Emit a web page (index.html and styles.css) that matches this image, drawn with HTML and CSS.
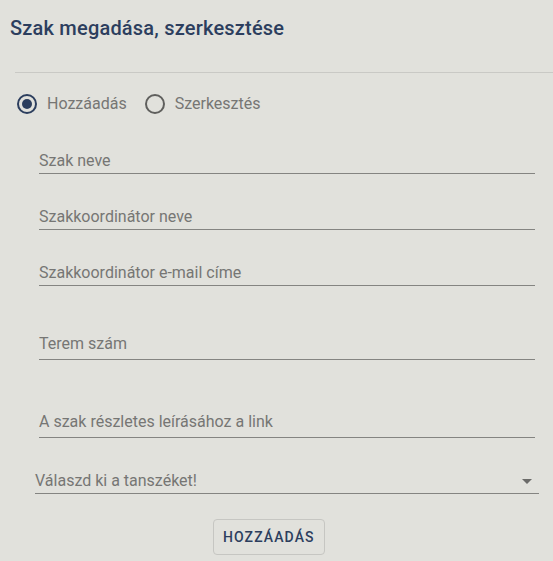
FILE: index.html
```html
<!DOCTYPE html>
<html lang="hu">
<head>
<meta charset="utf-8">
<title>Szak megadása, szerkesztése</title>
<link rel="stylesheet" href="styles.css">
</head>
<body>
<div class="page">
  <h1 class="title">Szak megadása, szerkesztése</h1>
  <div class="divider"></div>
  <div class="radios">
    <label class="radio">
      <span class="radio-circle checked"><span class="radio-dot"></span></span>
      <span class="radio-label">Hozzáadás</span>
    </label>
    <label class="radio">
      <span class="radio-circle"></span>
      <span class="radio-label">Szerkesztés</span>
    </label>
  </div>
  <div class="fields">
    <div class="field"><span class="field-label">Szak neve</span></div>
    <div class="field gap-s"><span class="field-label">Szakkoordinátor neve</span></div>
    <div class="field gap-s"><span class="field-label">Szakkoordinátor e-mail címe</span></div>
    <div class="field tall gap-m"><span class="field-label">Terem szám</span></div>
    <div class="field tall gap-l"><span class="field-label">A szak részletes leírásához a link</span></div>
  </div>
  <div class="select">
    <span class="field-label">Válaszd ki a tanszéket!</span>
    <svg class="select-arrow" width="24" height="24" viewBox="0 0 24 24"><path d="M7 10l5 5 5-5z"/></svg>
  </div>
  <div class="actions">
    <button class="btn" type="button">Hozzáadás</button>
  </div>
</div>
</body>
</html>
```

FILE: styles.css
```css
html, body {
  margin: 0;
  padding: 0;
  background: #e1e1dc;
}
body {
  font-family: Roboto, "Noto Sans", sans-serif;
  width: 553px;
  height: 561px;
  overflow: hidden;
}
.page {
  padding: 16px 0 0 10px;
}
.title {
  margin: 0;
  font-size: 20px;
  font-weight: 500;
  line-height: 24px;
  letter-spacing: 0.2px;
  color: #2c3e5e;
}
.divider {
  margin: 32px 0 0 5px;
  height: 1px;
  background: #c9c9c5;
}
.radios {
  display: flex;
  align-items: center;
  margin: 21px 0 0 7px;
  height: 20px;
}
.radio {
  display: flex;
  align-items: center;
  gap: 10px;
  margin-right: 18px;
}
.radio-circle {
  box-sizing: border-box;
  width: 20px;
  height: 20px;
  border: 2px solid #5f5f5d;
  border-radius: 50%;
  display: flex;
  align-items: center;
  justify-content: center;
}
.radio-circle.checked {
  border-color: #2c3e5e;
}
.radio-dot {
  width: 10px;
  height: 10px;
  border-radius: 50%;
  background: #2c3e5e;
}
.radio-label {
  font-size: 16px;
  line-height: 20px;
  color: #767674;
}
.fields {
  margin: 37px 18px 0 29px;
}
.field {
  border-bottom: 1px solid #848481;
  padding-bottom: 2px;
}
.field.tall {
  padding-bottom: 5px;
}
.gap-s { margin-top: 33px; }
.gap-m { margin-top: 48px; }
.gap-l { margin-top: 52px; }
.field-label {
  display: block;
  font-size: 16px;
  line-height: 20px;
  color: #767674;
}
.select {
  position: relative;
  margin: 33px 14px 0 25px;
  border-bottom: 1px solid #848481;
  padding-bottom: 2px;
}
.select-arrow {
  position: absolute;
  right: 0;
  top: -2px;
  fill: #6b6b69;
}
.actions {
  display: flex;
  margin: 25px 0 0 203px;
}
.btn {
  font-family: Roboto, "Noto Sans", sans-serif;
  font-size: 14px;
  font-weight: 500;
  letter-spacing: 1.1px;
  text-transform: uppercase;
  color: #2c3e5e;
  background: transparent;
  border: 1px solid #c6c6c2;
  border-radius: 4px;
  height: 36px;
  padding: 0 9px;
  line-height: 34px;
}
```
